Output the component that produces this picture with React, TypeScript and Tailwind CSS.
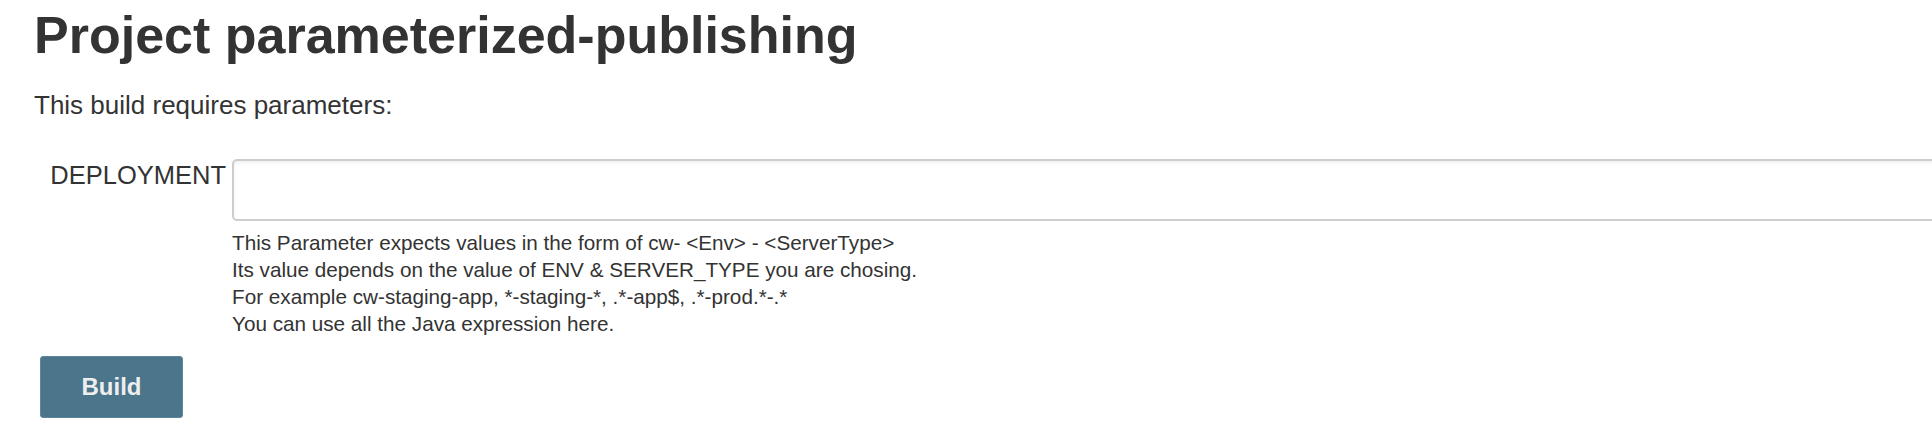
// Parameterized build page
export default function App() {
  return (
    <div className="w-full h-[434px] overflow-hidden bg-white text-[#333] font-['Liberation_Sans',Arial,sans-serif]">
      <div className="pl-[34px] pt-[5px]">
        <h1 className="text-[52px] leading-[60px] font-bold">Project parameterized-publishing</h1>
        <p className="mt-[25px] text-[26px] leading-[30px]">This build requires parameters:</p>

        <div className="mt-[39px] grid grid-cols-[192px_1fr] gap-x-[6px]">
          <div className="pt-[1px] text-right text-[25.5px] leading-[30px]">DEPLOYMENT</div>
          <div>
            <input
              type="text"
              className="block w-[1760px] h-[62px] border-2 border-[#cdcdcd] rounded-[5px] bg-white shadow-[inset_0_2px_3px_rgba(0,0,0,0.06)] outline-none"
            />
          </div>
          <div />
          <div className="mt-[8px] text-[20.7px] leading-[27px]">
            <div>This Parameter expects values in the form of cw- &lt;Env&gt; - &lt;ServerType&gt;</div>
            <div>Its value depends on the value of ENV &amp; SERVER_TYPE you are chosing.</div>
            <div>For example cw-staging-app, *-staging-*, .*-app$, .*-prod.*-.*</div>
            <div>You can use all the Java expression here.</div>
          </div>
        </div>

        <button className="mt-[19px] ml-[6px] w-[143px] h-[62px] rounded-[3px] bg-[#4b758b] border border-[#5d879c] text-[#eeeeee] text-[24px] font-bold leading-none">
          Build
        </button>
      </div>
    </div>
  );
}
